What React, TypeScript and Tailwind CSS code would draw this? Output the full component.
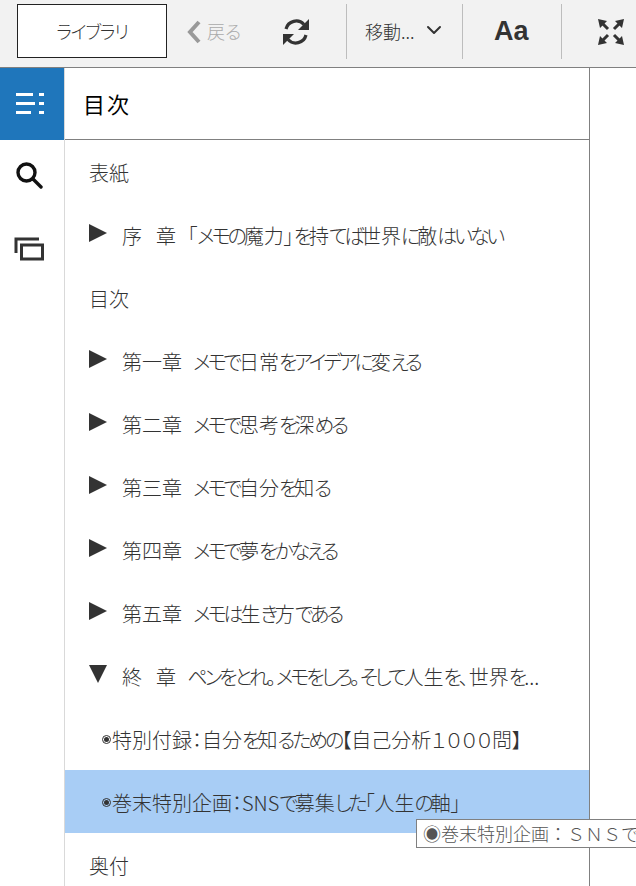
import { ChevronDown } from "lucide-react";

const FONT = "font-['Noto_Sans_CJK_JP','Liberation_Sans',sans-serif]";
const GAP = "\u2002\u2009";
const TITLE_GAP = "\u2002\u200a";

const rows = [
  { label: "表紙" },
  { label: `序${GAP}章${TITLE_GAP}「メモの魔力」を持てば世界に敵はいない`, arrow: "right" },
  { label: "目次" },
  { label: `第一章${TITLE_GAP}メモで日常をアイデアに変える`, arrow: "right" },
  { label: `第二章${TITLE_GAP}メモで思考を深める`, arrow: "right" },
  { label: `第三章${TITLE_GAP}メモで自分を知る`, arrow: "right" },
  { label: `第四章${TITLE_GAP}メモで夢をかなえる`, arrow: "right" },
  { label: `第五章${TITLE_GAP}メモは生き方である`, arrow: "right" },
  { label: `終${GAP}章${TITLE_GAP}ペンをとれ。メモをしろ。そして人生を、世界を...`, arrow: "down" },
  { label: "特別付録：自分を知るための【自己分析１０００問】", bullet: true },
  { label: "巻末特別企画：SNSで募集した「人生の軸」", bullet: true, active: true },
  { label: "奥付" },
];

// kana sit tighter than kanji in the reference
function Label({ text }: { text: string }) {
  return (
    <span>
      {text.split(/([ぁ-んァ-ヶー]+)/).map((part, i) =>
        i % 2 === 1 ? (
          <span key={i} className="tracking-[-3.1px]">{part}</span>
        ) : (
          <span key={i}>{part}</span>
        )
      )}
    </span>
  );
}

function Divider() {
  return <div className="w-px h-[55px] bg-[#bdbdbd] shrink-0" />;
}

function TocRow({ label, arrow, bullet, active }: { label: string; arrow?: string; bullet?: boolean; active?: boolean }) {
  return (
    <div className={`h-[63px] shrink-0 flex items-center text-[20px] [font-feature-settings:'palt'] font-light text-[#333] pt-[2px] whitespace-nowrap ${active ? "bg-[#a8cdf5]" : ""} ${bullet ? "pl-[37px]" : "pl-[24px]"}`}>
      {arrow === "right" && (
        <svg width="18" height="18" viewBox="0 0 18 18" className="shrink-0 mr-[15px] -mt-[6px]">
          <path d="M0 0 L18 9 L0 18 Z" fill="#333" />
        </svg>
      )}
      {arrow === "down" && (
        <svg width="18" height="18" viewBox="0 0 18 18" className="shrink-0 mr-[15px] -mt-[6px]">
          <path d="M0 0 L18 0 L9 18 Z" fill="#333" />
        </svg>
      )}
      {bullet && (
        <span className="w-[9px] h-[9px] rounded-full border border-[#333] flex items-center justify-center shrink-0 mr-px">
          <span className="w-[5px] h-[5px] rounded-full bg-[#333]" />
        </span>
      )}
      <Label text={label} />
    </div>
  );
}

export default function App() {
  return (
    <div className={`relative w-[636px] h-[886px] overflow-hidden bg-white flex flex-col ${FONT}`}>
      <header className="h-[68px] shrink-0 bg-[#f2f2f2] border-b border-[#808080] flex items-start pt-[4px] pl-[17px]">
        <button className="w-[150px] h-[54px] bg-white border border-[#222] text-[18px] tracking-[-1.2px] [font-feature-settings:'palt'] font-light text-[#333] shrink-0">ライブラリ</button>
        <div className="w-[95px] h-[55px] shrink-0 flex items-center pl-[20px]">
          <svg width="14" height="24" viewBox="0 0 14 24" fill="none" stroke="#999" strokeWidth="4" className="shrink-0">
            <path d="M12 2 L3 12 L12 22" />
          </svg>
          <span className="text-[18px] [font-feature-settings:'palt'] font-light text-[#aaa] ml-[6px]">戻る</span>
        </div>
        <div className="w-[84px] h-[55px] shrink-0 flex items-center pl-[20px]">
          <svg width="28" height="28" viewBox="0 0 28 28" fill="none" stroke="#333" strokeWidth="3.2">
            <path d="M4 11 A10.5 10.5 0 0 1 22 6.5" />
            <path d="M24 17 A10.5 10.5 0 0 1 6 21.5" />
            <path d="M27 1 V12 H16 Z" fill="#333" stroke="none" />
            <path d="M1 27 V16 H12 Z" fill="#333" stroke="none" />
          </svg>
        </div>
        <Divider />
        <div className="w-[115px] h-[55px] shrink-0 flex items-center pl-[18px] text-[#333]">
          <span className="text-[18px] font-light">移動...</span>
          <ChevronDown size={24} strokeWidth={2} className="ml-[7px] -mt-[4px] text-[#333]" />
        </div>
        <Divider />
        <div className="w-[98px] h-[55px] shrink-0 flex items-center pl-[31px] text-[27px] font-bold text-[#333] font-['Liberation_Sans',sans-serif]">Aa</div>
        <Divider />
        <div className="h-[55px] flex items-center pl-[35px] shrink-0">
          <svg width="28" height="28" viewBox="0 0 28 28" fill="#333" stroke="#333">
            <path d="M1 1 L10 3 L3 10 Z M27 1 L25 10 L18 3 Z M1 27 L3 18 L10 25 Z M27 27 L18 25 L25 18 Z" strokeWidth="0" />
            <path d="M5 5 L11 11 M23 5 L17 11 M5 23 L11 17 M23 23 L17 17" strokeWidth="3" fill="none" />
          </svg>
        </div>
      </header>
      <div className="flex flex-1 min-h-0">
        <aside className="w-[65px] shrink-0 border-r border-[#d9d9d9] flex flex-col items-stretch">
          <div className="h-[72px] bg-[#1f76bb] flex items-center justify-center pr-[2px]">
            <svg width="30" height="26" viewBox="0 0 30 26" fill="#fff">
              <rect x="0" y="2" width="17" height="3" />
              <rect x="23" y="2" width="5" height="3" />
              <rect x="0" y="11" width="19" height="3" />
              <rect x="23" y="11" width="5" height="3" />
              <rect x="0" y="20" width="15" height="3" />
              <rect x="23" y="20" width="5" height="3" />
            </svg>
          </div>
          <div className="h-[70px] flex items-center justify-center pr-[6px]">
            <svg width="28" height="28" viewBox="0 0 28 28" fill="none" stroke="#111" strokeWidth="3.4">
              <circle cx="11.5" cy="11.5" r="8.5" />
              <path d="M18 18 L26 26" strokeLinecap="round" />
            </svg>
          </div>
          <div className="h-[78px] flex items-center justify-center pr-[6px]">
            <svg width="30" height="24" viewBox="0 0 30 24" fill="none" stroke="#333" strokeWidth="3">
              <path d="M2 16 V2 H25" />
              <rect x="7.5" y="8" width="21" height="14" />
            </svg>
          </div>
        </aside>
        <main className="w-[525px] shrink-0 border-r border-[#808080] flex flex-col">
          <div className="h-[72px] shrink-0 border-b border-[#808080] flex items-center pl-[18px] text-[22px] tracking-[2px] text-black">目次</div>
          <div className="flex flex-col">
            {rows.map((r) => (
              <TocRow key={r.label} {...r} />
            ))}
          </div>
        </main>
      </div>
      <div className="absolute left-[416px] top-[819px] w-[240px] h-[29px] bg-white border border-[#808080] flex items-center pl-[6px] text-[18px] font-light text-[#555] whitespace-nowrap overflow-hidden">
        ◉巻末特別企画：ＳＮＳで募集した「人生の軸」
      </div>
    </div>
  );
}
